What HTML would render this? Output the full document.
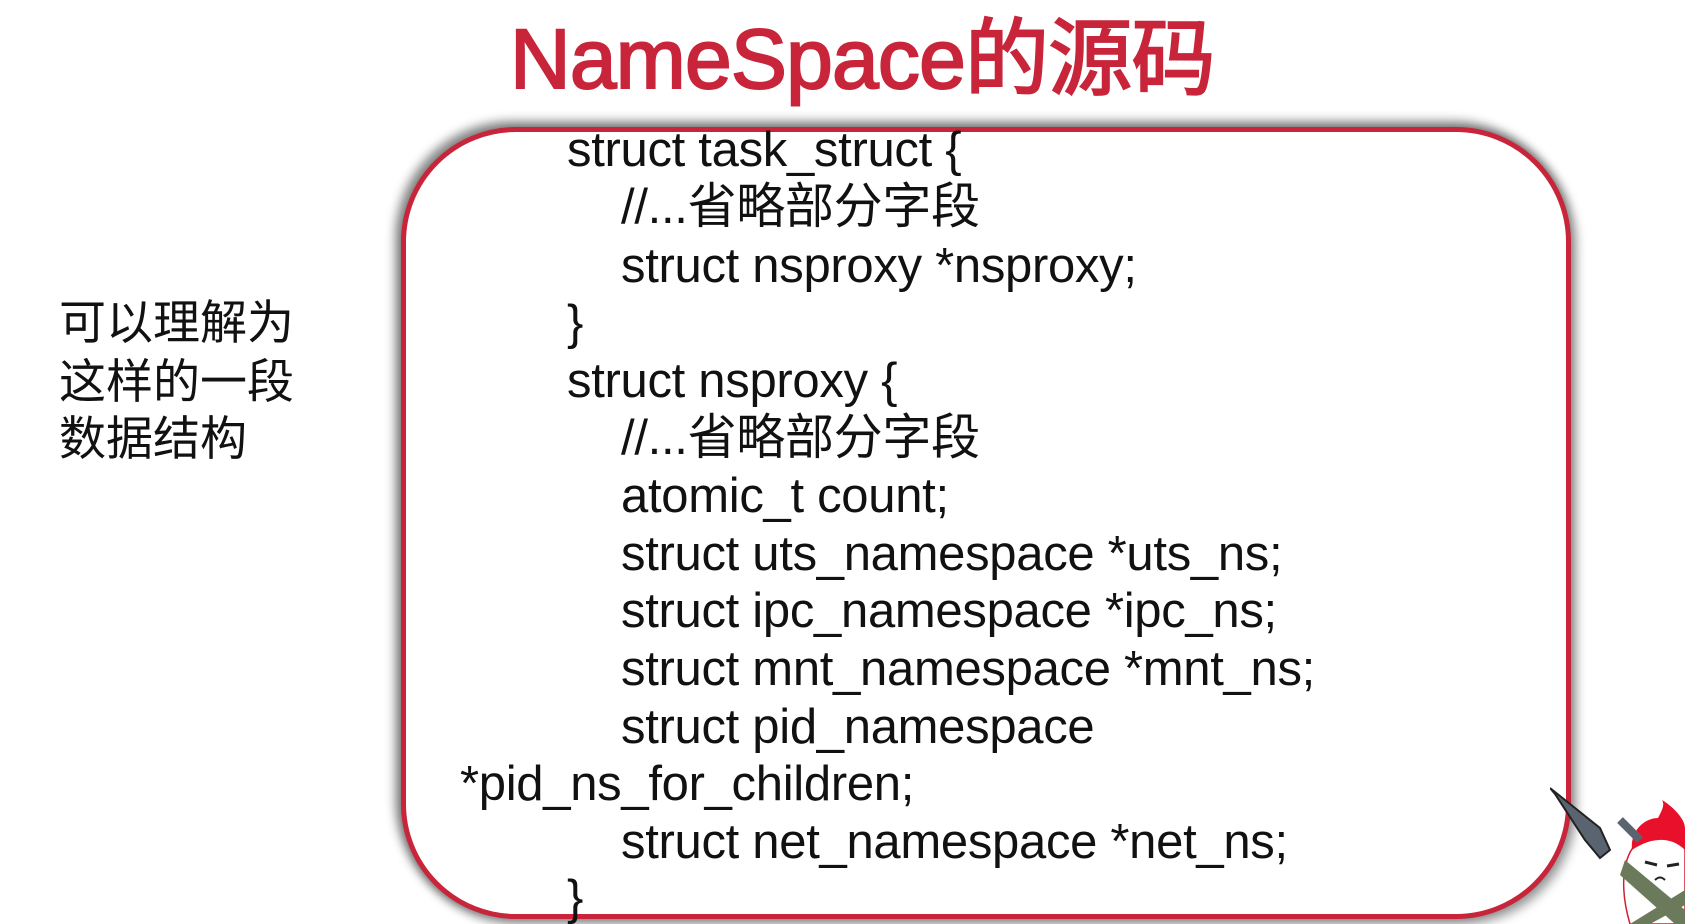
<!DOCTYPE html>
<html><head><meta charset="utf-8">
<style>
html,body{margin:0;padding:0;background:#fff;width:1685px;height:924px;overflow:hidden;position:relative;font-family:"Liberation Sans","Noto Sans CJK SC",sans-serif;}
.title{position:absolute;left:510px;top:14px;font-size:84px;color:#c8243a;line-height:90px;-webkit-text-stroke:2px #c8243a;letter-spacing:-0.8px;white-space:nowrap;}
.box{position:absolute;left:401px;top:127px;width:1160px;height:782px;border:5px solid #c8243a;border-radius:115px;box-shadow:-4px -4px 10px 2px rgba(0,0,0,.45),4px 4px 10px 2px rgba(0,0,0,.35);background:#fff;}
.l{position:absolute;font-size:49px;color:#111;white-space:nowrap;line-height:50px;letter-spacing:-0.3px;margin-top:3px;}
.side{position:absolute;left:59px;font-size:47px;color:#111;line-height:50px;}
</style></head><body>
<div class="title">NameSpace的源码</div>
<div class="box"></div>
<div class="l" style="left:567px;top:122px">struct task_struct {</div>
<div class="l" style="left:621px;top:179px">//...省略部分字段</div>
<div class="l" style="left:621px;top:238px">struct nsproxy *nsproxy;</div>
<div class="l" style="left:567px;top:295px">}</div>
<div class="l" style="left:567px;top:353px">struct nsproxy {</div>
<div class="l" style="left:621px;top:410px">//...省略部分字段</div>
<div class="l" style="left:621px;top:468px">atomic_t count;</div>
<div class="l" style="left:621px;top:526px">struct uts_namespace *uts_ns;</div>
<div class="l" style="left:621px;top:583px">struct ipc_namespace *ipc_ns;</div>
<div class="l" style="left:621px;top:641px">struct mnt_namespace *mnt_ns;</div>
<div class="l" style="left:621px;top:699px">struct pid_namespace</div>
<div class="l" style="left:460px;top:756px">*pid_ns_for_children;</div>
<div class="l" style="left:621px;top:814px">struct net_namespace *net_ns;</div>
<div class="l" style="left:567px;top:870px">}</div>
<div class="side" style="top:298px">可以理解为</div>
<div class="side" style="top:357px">这样的一段</div>
<div class="side" style="top:414px">数据结构</div>
<svg style="position:absolute;left:1550px;top:780px" width="135" height="144" viewBox="0 0 135 144">
<path d="M80 144 C70 110 72 80 85 65 C100 50 125 55 135 60 L135 144Z" fill="#fff" stroke="#d02030" stroke-width="1.5"/>
<path d="M82 70 C80 50 95 38 108 38 C112 30 115 25 112 20 C125 28 135 40 135 48 L135 70 C120 55 100 58 82 70Z" fill="#e8102a"/>
<path d="M95 82 l12 3 M117 86 l12 -2" stroke="#222" stroke-width="3"/>
<path d="M105 100 q5 -5 10 0" stroke="#222" stroke-width="2" fill="none"/>
<path d="M75 80 L135 130 L135 144 L125 144 L70 95Z" fill="#6b7a5a"/>
<path d="M80 144 L135 110 L135 125 L100 144Z" fill="#6b7a5a"/>
<path d="M0 8 L50 48 L60 70 L50 78 L35 60 L5 14Z" fill="#5a6470" stroke="#222" stroke-width="2"/>
<path d="M70 40 L90 60" stroke="#5a6470" stroke-width="8"/>
</svg>
</body></html>
